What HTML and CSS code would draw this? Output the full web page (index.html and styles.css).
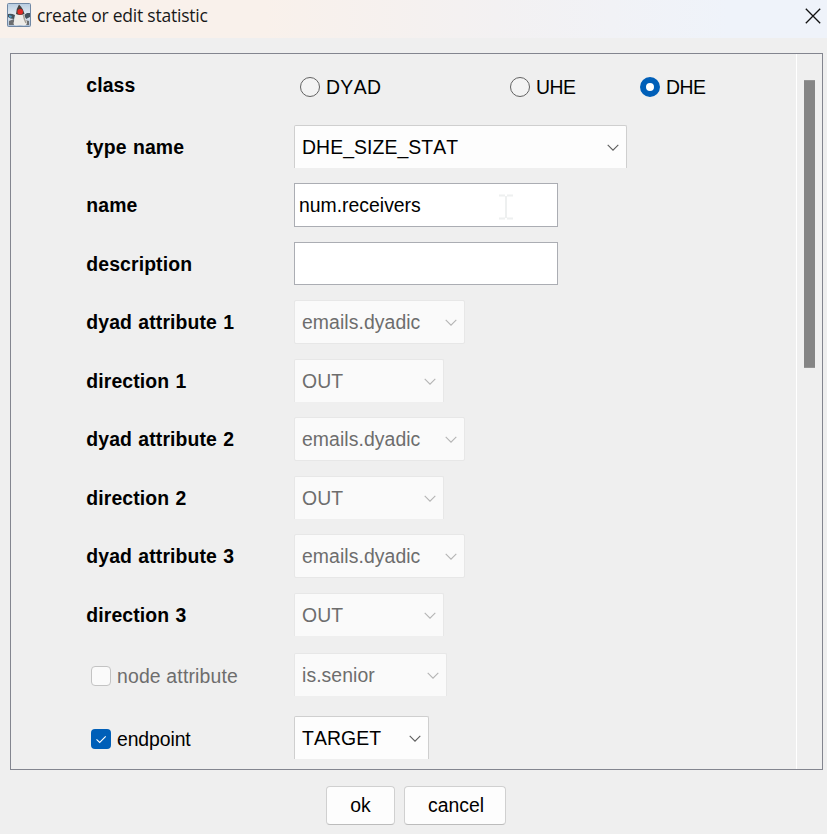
FILE: index.html
```html
<!DOCTYPE html>
<html lang="en">
<head>
<meta charset="utf-8">
<title>create or edit statistic</title>
<link rel="stylesheet" href="styles.css">
</head>
<body>
<svg class="defs" aria-hidden="true">
  <symbol id="chevron" viewBox="0 0 12 7"><path d="M.7.8 6 6.1 11.3.8" fill="none" stroke="currentColor" stroke-width="1.1"/></symbol>
</svg>
<header class="titlebar">
  <svg class="logo" viewBox="0 0 24 24">
    <defs><linearGradient id="sky" x1="0" y1="0" x2="0" y2="1"><stop offset="0" stop-color="#b7cce0"/><stop offset=".5" stop-color="#e4ebf2"/><stop offset="1" stop-color="#a9bdd6"/></linearGradient></defs>
    <rect x=".5" y=".5" width="23" height="23" rx="1" fill="url(#sky)" stroke="#7088a5"/>
    <path d="M1 11q3-1 7 1l-1 4q-4 0-6-2zM17 12l3-2h3v4l-4 2z" fill="#46535d"/>
    <path d="M2 12l3 1-1 2-2-1z" fill="#4e9ac4"/>
    <path d="M2 18l5-2v6H2zM18 17l4 1v4h-5z" fill="#6c6e70"/>
    <path d="M9 9H17Q17 14 20 19Q20 22.500 17 22.500Q13 21.500 9 22.500Q6.500 22.500 6.500 20Q9 14 9 9Z" fill="#eeece8"/>
    <path d="M16.500 12Q17 16 19 20" stroke="#a5a098" stroke-width="1.500" fill="none"/>
    <path d="M12 1.500Q16 5 17.500 11Q13 13 9 11Q9 6 12 1.500Z" fill="#453e3c"/>
    <circle cx="13.200" cy="8.800" r="2.800" fill="#e22a24"/>
  </svg>
  <h1 class="title">create or edit statistic</h1>
  <svg class="close" viewBox="0 0 16 16"><path d="M.8.8 15.200 15.200M15.200.8.8 15.200" stroke="#111" stroke-width="1.300"/></svg>
</header>
<main class="panel">
  <form class="form">
    <div class="row row-class">
      <span class="label">class</span>
      <div class="radios">
        <label class="option spaced"><i class="radio"></i>DYAD</label>
        <label class="option"><i class="radio"></i>UHE</label>
        <label class="option"><i class="radio on"></i>DHE</label>
      </div>
    </div>
    <div class="row short"><span class="label">type name</span><div class="select w-type">DHE_SIZE_STAT<svg><use href="#chevron"/></svg></div></div>
    <div class="row short"><span class="label">name</span><div class="input">num.receivers<svg class="ibeam" viewBox="0 0 14 26"><path d="M0 1.500h6M8 1.500h6M7 2v22M0 24.500h6M8 24.500h6" fill="none" stroke="#eef0f0" stroke-width="2"/></svg></div></div>
    <div class="row long"><span class="label">description</span><div class="input empty"></div></div>
    <div class="row short"><span class="label">dyad attribute 1</span><div class="select off w-dyad">emails.dyadic<svg><use href="#chevron"/></svg></div></div>
    <div class="row long"><span class="label">direction 1</span><div class="select off w-dir">OUT<svg><use href="#chevron"/></svg></div></div>
    <div class="row short"><span class="label">dyad attribute 2</span><div class="select off w-dyad">emails.dyadic<svg><use href="#chevron"/></svg></div></div>
    <div class="row long"><span class="label">direction 2</span><div class="select off w-dir">OUT<svg><use href="#chevron"/></svg></div></div>
    <div class="row short"><span class="label">dyad attribute 3</span><div class="select off w-dyad">emails.dyadic<svg><use href="#chevron"/></svg></div></div>
    <div class="row long"><span class="label">direction 3</span><div class="select off w-dir">OUT<svg><use href="#chevron"/></svg></div></div>
    <div class="row tall"><label class="check off-text"><i class="box"></i>node attribute</label><div class="select off w-node">is.senior<svg><use href="#chevron"/></svg></div></div>
    <div class="row tall"><label class="check"><i class="box checked"><svg viewBox="0 0 20 20"><path d="M5.500 10.300 8.700 13.400 14.700 7.300" fill="none" stroke="#fff" stroke-width="1.100"/></svg></i>endpoint</label><div class="select w-end">TARGET<svg><use href="#chevron"/></svg></div></div>
  </form>
  <div class="scrollbar"><div class="thumb"></div></div>
</main>
<footer class="actions">
  <button class="btn btn-ok">ok</button>
  <button class="btn btn-cancel">cancel</button>
</footer>
</body>
</html>
```
FILE: styles.css
```css
* { box-sizing: border-box; }
body {
  margin: 0;
  width: 827px;
  height: 834px;
  overflow: hidden;
  background: #efefef;
  color: #000;
  font: 19.4px "Liberation Sans", Arial, sans-serif;
  font-kerning: none;
}
.defs { position: absolute; width: 0; height: 0; }
.titlebar {
  display: flex;
  align-items: flex-start;
  height: 38px;
  padding: 3px 6px 0 7px;
  background: linear-gradient(90deg, #f9f1eb 0, #f9f1eb 32%, #f3f1f2 60%, #eff3fa 88%);
}
.logo { width: 24px; height: 24px; }
.title {
  flex: 1;
  margin: 0 0 0 6px;
  font: 400 17.5px/24px "Open Sans", sans-serif;
  letter-spacing: -0.22px;
  color: #191919;
}
.close { width: 16px; height: 16px; margin-top: 5px; }
.panel {
  display: flex;
  width: 813px;
  height: 717px;
  margin: 15px 0 0 10px;
  border: 1px solid #83858f;
}
.form { flex: 1; }
.row {
  display: grid;
  grid-template-columns: 208px 1fr;
  height: 58px;
  padding: 7px 0 0 75px;
  line-height: 44px;
}
.long { height: 59px; padding-top: 8px; }
.tall { height: 63px; padding-top: 9px; }
.row-class { height: 64px; padding-top: 9px; }
.label { font-weight: 700; letter-spacing: 0.12px; word-spacing: 0.8px; padding-left: 0.3px; }
.radios { display: grid; grid-template-columns: 210px 130px 1fr; padding: 2px 0 0 6px; }
.option { display: flex; align-items: center; gap: 6px; height: 44px; letter-spacing: -0.5px; }
.option.spaced { letter-spacing: 0.35px; }
.radio {
  width: 20px;
  height: 20px;
  border: 1px solid #626262;
  border-radius: 50%;
  background: #f3f3f3;
}
.radio.on { border: 6px solid #005fb8; background: #fff; }
.select {
  display: flex;
  align-items: center;
  justify-content: space-between;
  height: 43px;
  padding: 0 7px;
  border: 1px solid #cfcfcf;
  border-bottom: 0;
  border-radius: 2px 2px 0 0;
  background: #fdfdfd;
  color: #000;
  letter-spacing: 0.07px;
  line-height: 42px;
}
.select svg { width: 12px; height: 7px; color: #5d5d5d; }
.select.off { border-color: #e7e7e7; background: #fafafa; color: #6d6d6d; }
.select.off svg { color: #b4b4b4; }
.w-type { width: 333px; }
.select.w-dyad { width: 171px; height: 44px; border-bottom: 1px solid #e7e7e7; border-radius: 2px; }
.w-dir { width: 150px; }
.w-node { width: 153px; }
.w-end { width: 135px; }
.input {
  display: flex;
  align-items: center;
  justify-content: space-between;
  width: 264px;
  height: 44px;
  padding: 0 44px 0 4px;
  border: 1px solid #abadb3;
  background: #fff;
}
.input.empty { height: 43px; }
.ibeam { width: 14px; height: 26px; margin-top: 4px; }
.check { display: flex; align-items: center; gap: 6px; height: 46px; padding-left: 5px; letter-spacing: -0.1px; }
.check.off-text { color: #6d6d6d; letter-spacing: 0.17px; }
.box {
  width: 20px;
  height: 20px;
  border: 1px solid #c3c3c3;
  border-radius: 4px;
  background: #fafafa;
}
.box.checked { border: 0; background: #005fb8; }
.box svg { display: block; width: 20px; height: 20px; }
.scrollbar { width: 26px; padding: 26px 0 0 7px; border-left: 1px solid #fff; }
.thumb { width: 11px; height: 288px; background: #858585; border: solid #959595; border-width: 1px 0; }
.actions { display: flex; gap: 9px; padding: 16px 0 0 326px; }
.btn {
  height: 39px;
  padding: 0;
  border: 1px solid #d0d0d0;
  border-bottom-color: #bcbcbc;
  border-radius: 4px;
  background: #fdfdfd;
  color: #000;
  font: inherit;
}
.btn-ok { width: 69px; }
.btn-cancel { width: 102px; padding-left: 2px; }
```
